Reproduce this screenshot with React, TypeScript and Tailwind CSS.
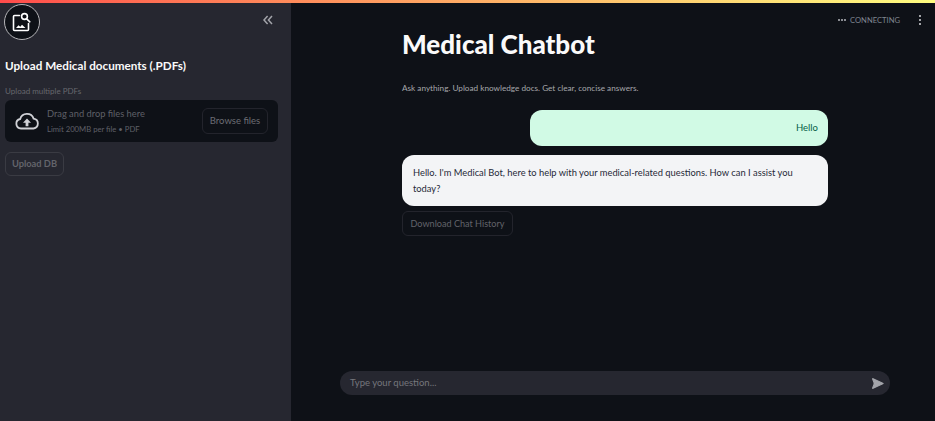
import {SendHorizontal} from "lucide-react";

const font = {fontFamily: 'Lato, "Noto Sans", sans-serif'};

function LogoIcon() {
  return (
    <svg width="20" height="20" viewBox="0 0 20 20" fill="none" stroke="white" strokeWidth="1.6">
      <path d="M7.5 3.5H2.5a1 1 0 0 0-1 1V17.5a1 1 0 0 0 1 1h13a1 1 0 0 0 1-1v-6" strokeLinecap="round" />
      <circle cx="12.5" cy="4.5" r="2.9" />
      <path d="M14.6 6.8l3.2 3" strokeLinecap="round" />
      <path d="M4 16l2.5-2.7 1.8 1.5 1.7-2 3.5 3.2z" fill="white" stroke="none" />
    </svg>
  );
}

function CloudIcon() {
  return (
    <svg width="24" height="18" viewBox="0 0 24 18" fill="none">
      <path
        d="M6 16.5a4.8 4.8 0 0 1-.8-9.5A7 7 0 0 1 18.6 6.6 5 5 0 0 1 18.5 16.5z"
        stroke="#d0d1d6"
        strokeWidth="1.8"
      />
      <path d="M12 6.5l4 4.2h-2.6v3.6h-2.8v-3.6H8z" fill="#d0d1d6" />
    </svg>
  );
}

function Sidebar() {
  return (
    <aside className="w-[291px] h-full shrink-0 bg-[#262730] flex flex-col">
      <div className="flex items-center justify-between pl-1 pr-[18px] pt-[4px]">
        <div className="w-9 h-9 rounded-full bg-[#0e1117] border border-[#b5b5b8] flex items-center justify-center">
          <LogoIcon />
        </div>
        <svg className="-mt-1" width="10" height="10" viewBox="0 0 10 10" fill="none" stroke="#a3a4aa" strokeWidth="1.5">
          <path d="M4.6 1L1 5l3.6 4M9 1L5.4 5 9 9" />
        </svg>
      </div>
      <div className="px-[5px]">
        <h2 className="mt-4 text-[11.7px] leading-[18px] font-bold text-[#fafafa]">
          Upload Medical documents (.PDFs)
        </h2>
        <p className="mt-[11px] text-[8px] leading-3 text-[#66676e]">Upload multiple PDFs</p>
        <div className="mt-[3px] w-[273px] h-[42px] rounded-md bg-[#0e1117] flex items-center pl-[10px] pr-[10px]">
          <CloudIcon />
          <div className="ml-2 flex-1">
            <div className="text-[9.3px] leading-[14px] text-[#5f6068]">Drag and drop files here</div>
            <div className="mt-[3px] text-[7.7px] leading-[11px] text-[#5f6068]">Limit 200MB per file • PDF</div>
          </div>
          <button className="w-[66px] h-[26px] rounded-md border border-[#23242c] text-[9.5px] text-[#6c6d74]">
            Browse files
          </button>
        </div>
        <button className="mt-[10px] w-[59px] h-6 rounded-md border border-[#3a3b43] text-[9.3px] font-bold text-[#63646b]">
          Upload DB
        </button>
      </div>
    </aside>
  );
}

function Main() {
  return (
    <main className="relative flex-1 h-full bg-[#0e1117] overflow-hidden">
      <div className="absolute top-[14px] right-[14px] flex items-center text-[#7f8590]">
        <span className="w-[8px] border-t-2 border-dotted border-[#8a8c92]" />
        <span className="ml-1 text-[7.6px] leading-3">CONNECTING</span>
        <span className="ml-[19px] flex flex-col gap-[2px]">
          <span className="w-[2px] h-[2px] rounded-full bg-[#d4d5d8]" />
          <span className="w-[2px] h-[2px] rounded-full bg-[#d4d5d8]" />
          <span className="w-[2px] h-[2px] rounded-full bg-[#d4d5d8]" />
        </span>
      </div>
      <div className="ml-[111px] w-[426px] flex flex-col">
        <h1 className="mt-[28px] text-[26px] leading-[32px] font-black text-[#fafafa]">Medical Chatbot</h1>
        <p className="mt-[22px] text-[8.2px] leading-3 text-[#a6a7ab]">
          Ask anything. Upload knowledge docs. Get clear, concise answers.
        </p>
        <div className="mt-4 self-end w-[298px] h-9 rounded-xl bg-[#d1fae5] flex items-center justify-end pr-[10px] text-[9.5px] text-[#065f46]">
          Hello
        </div>
        <div className="mt-[9px] h-[51px] rounded-xl bg-[#f3f4f6] pl-[11px] pr-[10px] pt-[10px] text-[9.33px] leading-4 text-[#1f2937]">
          Hello. I'm Medical Bot, here to help with your medical-related questions. How can I assist you today?
        </div>
        <button className="mt-[5px] self-start w-[111px] h-[25px] rounded-md border border-[#23242c] text-[9.1px] text-[#62636a]">
          Download Chat History
        </button>
      </div>
      <div className="absolute left-[49px] top-[371px] w-[550px] h-6 rounded-full bg-[#262730] flex items-center justify-between pl-[10px] pr-[6px]">
        <span className="text-[9.5px] text-[#75767c]">Type your question...</span>
        <SendHorizontal size={13} className="text-[#a3a4aa]" fill="#a3a4aa" />
      </div>
    </main>
  );
}

export default function App() {
  return (
    <div className="relative w-[935px] h-[421px] flex overflow-hidden bg-[#0e1117]" style={font}>
      <div className="absolute left-0 top-0 z-10 w-full h-[3px] bg-gradient-to-r from-[#ff4b4b] to-[#fffd80]" />
      <Sidebar />
      <Main />
    </div>
  );
}
